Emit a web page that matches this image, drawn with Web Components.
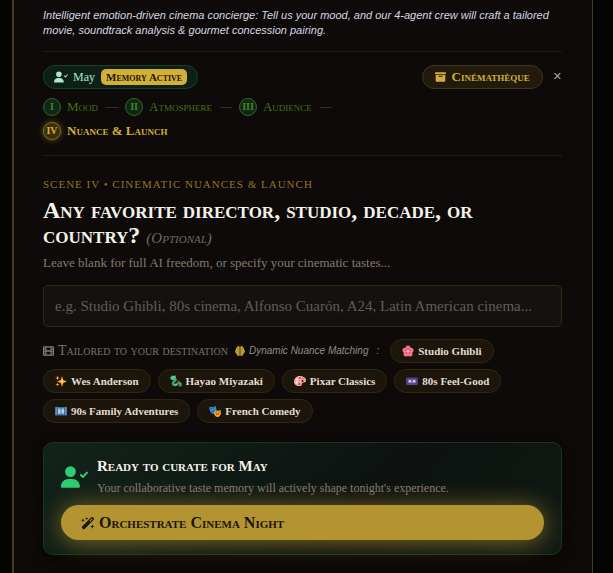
<!DOCTYPE html>
<html lang="en">
<head>
<meta charset="utf-8">
<meta name="viewport" content="width=device-width, initial-scale=1">
<title>Cinema Concierge</title>
<style>
  body {
    margin: 0;
    background: #040403;
    color: #f5f2ea;
    font-family: "Liberation Serif", serif;
    --display: "Liberation Serif", serif;
    --gold: #d4af37;
    --gold-dark: #b39431;
    --muted: #857b6e;
    --line: #221e18;
  }
</style>
</head>
<body>
<cinema-frame>
  <cinema-tagline>Intelligent emotion-driven cinema concierge: Tell us your mood, and our 4-agent crew will craft a tailored movie, soundtrack analysis &amp; gourmet concession pairing.</cinema-tagline>
  <guest-bar name="May"></guest-bar>
  <scene-steps></scene-steps>
  <nuance-form></nuance-form>
  <launch-card>
    <span slot="title">Ready to curate for May</span>
    <span slot="text">Your collaborative taste memory will actively shape tonight's experience.</span>
  </launch-card>
</cinema-frame>

<script>
const ICONS = {
  userCheck: ['0 0 640 512', '<path fill="currentColor" d="M96 128a128 128 0 1 1 256 0A128 128 0 1 1 96 128zM0 482.3C0 383.8 79.800 304 178.300 304h91.400C368.200 304 448 383.800 448 482.300c0 16.400-13.300 29.700-29.700 29.700H29.700C13.300 512 0 498.700 0 482.300z"/><path d="M472 208l48 48 96-104" fill="none" stroke="currentColor" stroke-width="46" stroke-linecap="round" stroke-linejoin="round"/>'],
  archive: ['0 0 512 512', '<path fill="currentColor" d="M32 32h448c18 0 32 14 32 32v32c0 18-14 32-32 32H32C14 128 0 114 0 96V64c0-18 14-32 32-32zM32 160h448v256c0 35-29 64-64 64H96c-35 0-64-29-64-64zm128 48v16c0 9 7 16 16 16h160c9 0 16-7 16-16v-16c0-9-7-16-16-16H176c-9 0-16 7-16 16z"/>'],
  film: ['0 0 512 512', '<path fill="currentColor" fill-rule="evenodd" d="M64 32h384c35 0 64 29 64 64v320c0 35-29 64-64 64H64c-35 0-64-29-64-64V96c0-35 29-64 64-64zM48 96v48h64V88H56zM48 192v48h64v-48zM48 288v48h64v-48zM48 376v48h64v-48zM400 88v56h64V88zM400 192v48h64v-48zM400 288v48h64v-48zM400 376v48h64v-48zM160 88v136h192V88zM160 288v136h192V288z"/>'],
  brain: ['0 0 512 512', '<path fill="currentColor" d="M184 0c31 0 56 25 56 56v400c0 31-25 56-56 56-29 0-53-21-56-50-35 3-64-25-64-60 0-12 3-24 9-34-43-9-73-44-73-86 0-34 20-64 49-78-31-38-12-92 35-104-11-36 11-72 46-77 5-14 28-23 54-23zM328 0c-31 0-56 25-56 56v400c0 31 25 56 56 56 29 0 53-21 56-50 35 3 64-25 64-60 0-12-3-24-9-34 43-9 73-44 73-86 0-34-20-64-49-78 31-38 12-92-35-104 11-36-11-72-46-77-5-14-28-23-54-23z"/>'],
  wand: ['0 0 576 512', '<path fill="currentColor" fill-rule="evenodd" d="M234 7l18 45 45 18-45 18-18 45-18-45-45-18 45-18zM80 64l22 58 58 22-58 22-22 58-22-58-58-22 58-22zM464 320l24 64 64 24-64 24-24 64-24-64-64-24 64-24zM46 395L421 20c18-18 48-18 66 0l37 37c18 18 18 48 0 66L149 498c-18 18-48 18-66 0l-37-37c-18-18-18-48 0-66zM378 196l105-105-30-30-105 105z"/>'],
  blossom: ['0 0 24 24', '<g fill="#fb7195"><circle cx="12" cy="6" r="5"/><circle cx="18" cy="10.500" r="5"/><circle cx="16" cy="18" r="5"/><circle cx="8" cy="18" r="5"/><circle cx="6" cy="10.500" r="5"/></g><path d="M12 12V5M12 12l6-2M12 12l4 6M12 12l-4 6M12 12l-6-2" stroke="#d92d62" stroke-width="1.300"/><circle cx="12" cy="12.500" r="2.500" fill="#ffe0a1"/>'],
  sparkles: ['0 0 24 24', '<path fill="#fda83a" d="M14 2l2.500 8L24 13l-7.500 3L14 24l-2.500-8L4 13l7.500-3zM5 1l1.200 3.800L10 6 6.200 7.200 5 11 3.800 7.200 0 6l3.800-1.200zM5 15l1 3 3 1-3 1-1 3-1-3-3-1 3-1z"/><path fill="#ffdc79" d="M14 8l1 4 4 1-4 1-1 4-1-4-4-1 4-1z"/>'],
  dragon: ['0 0 24 24', '<path d="M5 6c6 0 7 3 4 6s-5 7 0 8 5-4 9-4 4 4 2 5" fill="none" stroke="#35a06f" stroke-width="5" stroke-linecap="round"/><path fill="#4fbd88" d="M0 6l4-5 5 1 2-2 1 5-2 5-7 0z"/><path d="M10 9l4 1-3 2M15 15l2-4 2 4" fill="none" stroke="#d9653d" stroke-width="1.300"/><path d="M8 18c2 3 5 2 6 0" fill="none" stroke="#e8cf71" stroke-width="1.500"/><circle cx="6" cy="4" r="1" fill="#fff"/>'],
  palette: ['0 0 24 24', '<path fill="#f5a5a2" fill-rule="evenodd" d="M12 2C4 2 0 7 0 13c0 7 6 10 13 9 4-1 2-5 4-6 2-2 7 0 7-5 0-6-6-9-12-9zm5 8a2 2 0 1 1 0 4 2 2 0 0 1 0-4z"/><circle cx="6" cy="9" r="2" fill="#fff0b0"/><circle cx="12" cy="6" r="2" fill="#de3947"/><circle cx="5" cy="15" r="2" fill="#fff"/><circle cx="11" cy="18" r="2" fill="#9a3b70"/><circle cx="18" cy="7" r="1.500" fill="#d8485b"/>'],
  cassette: ['0 0 24 24', '<rect y="5" width="24" height="15" rx="2" fill="#534080"/><rect x="4" y="9" width="16" height="7" rx="1" fill="#8b79b8"/><circle cx="8" cy="12.500" r="2" fill="#eee9f7"/><circle cx="16" cy="12.500" r="2" fill="#eee9f7"/><path fill="#6b539a" d="M11 10h2v4h-2zM6 17h12v2H6z"/>'],
  frames: ['0 0 24 24', '<rect y="4" width="24" height="17" rx="1" fill="#456ea3"/><path fill="#91c8f1" d="M5 7h14v11H5z"/><path d="M5 5v15M19 5v15M12 7v11" stroke="#315583" stroke-width="1.500"/><path d="M2.500 5v15M21.500 5v15" stroke="#b3c8df" stroke-width="2" stroke-dasharray="2 2"/><path d="M7 14l2-4 2 4M14 14l2-4 2 4" fill="none" stroke="#d5efff"/>'],
  masks: ['0 0 24 24', '<path fill="#328bdf" d="M1 3c5 2 8 1 13-1l1 9c0 5-3 7-5 7-4 0-8-4-9-9z"/><path fill="#f4a52b" d="M11 10c4 2 8 2 12 0l1 6c-1 5-3 8-7 8s-7-4-7-8z"/><path d="M4 7l2-1M9 6l2-1M5 12c3 3 6 1 7-2" fill="none" stroke="#0b3768" stroke-width="1.500"/><path d="M13 15l3-1M19 14l2 1M14 20c1-3 5-3 6-1" fill="none" stroke="#653609" stroke-width="1.500"/>']
};

class CineIcon extends HTMLElement {
  constructor() {
    super();
    this.attachShadow({mode: 'open'});
  }

  connectedCallback() {
    const [box, body] = ICONS[this.getAttribute('name')];
    this.shadowRoot.innerHTML = `
      <style>
        :host { display: block; flex: none; width: 12px; height: 12px; }
        svg { display: block; width: 100%; height: 100%; }
      </style>
      <svg viewBox="${box}" aria-hidden="true">${body}</svg>
    `;
  }
}

class CinemaFrame extends HTMLElement {
  constructor() {
    super();
    this.attachShadow({mode: 'open'}).innerHTML = `
      <style>
        :host { display: block; padding: 0 20px 0 12px; }
        main {
          box-sizing: border-box;
          min-height: 100vh;
          padding: 8px 30px 18px 29px;
          border: solid #493b17;
          border-width: 0 1px 0 2px;
          background: #0e0a09;
        }
      </style>
      <main><slot></slot></main>
    `;
  }
}

class CinemaTagline extends HTMLElement {
  constructor() {
    super();
    this.attachShadow({mode: 'open'}).innerHTML = `
      <style>
        :host {
          display: block;
          padding-bottom: 13px;
          border-bottom: 1px dotted #352e22;
          color: #d3d8e3;
          font: italic 11px/15px "Liberation Sans", sans-serif;
        }
        p { margin: 0; }
      </style>
      <p><slot></slot></p>
    `;
  }
}

class GuestBar extends HTMLElement {
  constructor() {
    super();
    this.attachShadow({mode: 'open'});
  }

  connectedCallback() {
    this.shadowRoot.innerHTML = `
      <style>
        :host {
          display: flex;
          align-items: center;
          justify-content: space-between;
          margin-top: 13px;
        }
        div { display: flex; align-items: center; }
        .guest, .archive {
          box-sizing: border-box;
          height: 24px;
          padding: 0 10px;
          border: 1px solid #16402c;
          border-radius: 12px;
        }
        .guest { gap: 5px; background: #0d2018; color: #a9e8cb; font-size: 12px; }
        .guest cine-icon { width: 14px; }
        .badge {
          margin-left: 1px;
          padding: 0 5px;
          border-radius: 5px;
          background: var(--gold);
          color: #1b1508;
          font: bold small-caps 11px/16px var(--display);
        }
        .archive {
          display: flex;
          align-items: center;
          gap: 6px;
          padding: 0 12px;
          border-color: #40361a;
          background: #211a0d;
          color: var(--gold);
          font: bold small-caps 13px/16px var(--display);
        }
        .archive cine-icon { width: 11px; }
        .close {
          margin-left: 10px;
          padding: 0;
          border: 0;
          background: none;
          color: #aaa69d;
          font: 11px/16px "DejaVu Sans", sans-serif;
        }
      </style>
      <div class="guest">
        <cine-icon name="userCheck"></cine-icon>
        <span>${this.getAttribute('name')}</span>
        <span class="badge">Memory Active</span>
      </div>
      <div>
        <button class="archive" type="button"><cine-icon name="archive"></cine-icon>Cinémathèque</button>
        <button class="close" type="button" aria-label="Close">✕</button>
      </div>
    `;
  }
}

class SceneSteps extends HTMLElement {
  #steps = [
    ['I', 'Mood'],
    ['II', 'Atmosphere'],
    ['III', 'Audience'],
    ['IV', 'Nuance &amp; Launch']
  ];

  constructor() {
    super();
    this.attachShadow({mode: 'open'});
  }

  connectedCallback() {
    this.shadowRoot.innerHTML = `
      <style>
        :host {
          display: block;
          padding: 9px 0 15px;
          border-bottom: 1px solid var(--line);
        }
        ol {
          display: flex;
          flex-wrap: wrap;
          gap: 6px 7px;
          margin: 0;
          padding: 0;
          list-style: none;
        }
        li {
          display: flex;
          align-items: center;
          gap: 6px;
          color: #427411;
          font: small-caps 13px/18px var(--display);
        }
        li:not(:last-child)::after {
          content: "";
          width: 12px;
          height: 1px;
          margin-left: 2px;
          background: #39311f;
        }
        .num {
          box-sizing: border-box;
          width: 18px;
          height: 18px;
          border: 1px solid #3c6420;
          border-radius: 50%;
          background: #0c2819;
          color: #4b8414;
          text-align: center;
          font: bold 10px/16px var(--display);
        }
        li:last-child { flex-basis: 100%; color: var(--gold); font-weight: bold; }
        li:last-child .num {
          border-color: #806a2b;
          background: #3c2e10;
          color: var(--gold);
          box-shadow: 0 0 6px #6e571c;
        }
      </style>
      <ol>
        ${this.#steps.map(([num, label]) => `
          <li><span class="num">${num}</span><span>${label}</span></li>
        `).join('')}
      </ol>
    `;
  }
}

class NuanceChip extends HTMLElement {
  constructor() {
    super();
    this.attachShadow({mode: 'open'});
  }

  connectedCallback() {
    this.shadowRoot.innerHTML = `
      <style>
        :host { display: block; }
        button {
          box-sizing: border-box;
          display: flex;
          align-items: center;
          gap: 4px;
          height: 24px;
          padding: 0 11px;
          border: 1px solid #30270f;
          border-radius: 12px;
          background: #1c150b;
          color: #e2ddd2;
          font: bold 11px/16px var(--display);
          white-space: nowrap;
        }
      </style>
      <button type="button"><cine-icon name="${this.getAttribute('icon')}"></cine-icon><slot></slot></button>
    `;
  }
}

class NuanceForm extends HTMLElement {
  #chips = [
    ['blossom', 'Studio Ghibli'],
    ['sparkles', 'Wes Anderson'],
    ['dragon', 'Hayao Miyazaki'],
    ['palette', 'Pixar Classics'],
    ['cassette', '80s Feel-Good'],
    ['frames', '90s Family Adventures'],
    ['masks', 'French Comedy']
  ];

  constructor() {
    super();
    this.attachShadow({mode: 'open'});
  }

  connectedCallback() {
    this.shadowRoot.innerHTML = `
      <style>
        :host { display: block; padding-top: 20px; }
        p, h2 { margin: 0; }
        .scene {
          color: #947624;
          font-size: 11px;
          line-height: 16px;
          letter-spacing: 1px;
          text-transform: uppercase;
        }
        h2 {
          margin-top: 6px;
          font: bold small-caps 24px/25px var(--display);
        }
        em { color: #706b65; font-size: 15px; font-weight: normal; }
        .hint { margin-top: 3px; color: var(--muted); font-size: 13px; line-height: 18px; }
        input {
          box-sizing: border-box;
          display: block;
          width: 100%;
          height: 42px;
          margin-top: 13px;
          padding: 0 11px;
          border: 1px solid #30280f;
          border-radius: 5px;
          background: #15110e;
          color: #f5f2ea;
          font: 15px/20px var(--display);
        }
        input::placeholder { color: #625d58; opacity: 1; }
        .chips {
          display: flex;
          flex-wrap: wrap;
          align-items: center;
          gap: 6px 7px;
          margin-top: 12px;
        }
        .tailored, .match { display: flex; align-items: center; gap: 4px; color: #77726b; }
        .tailored { font: small-caps 14px/16px var(--display); }
        .tailored cine-icon { width: 11px; color: #858078; }
        .match { font: italic 10px/16px "Liberation Sans", sans-serif; color: #908c85; }
        .match cine-icon { width: 10px; color: #b99b31; }
        .colon { margin: 0 4px; }
      </style>
      <p class="scene">Scene IV • Cinematic Nuances &amp; Launch</p>
      <h2><label for="taste">Any favorite director, studio, decade, or <span>country?</span> <em>(Optional)</em></label></h2>
      <p class="hint">Leave blank for full AI freedom, or specify your cinematic tastes...</p>
      <input id="taste" type="text" placeholder="e.g. Studio Ghibli, 80s cinema, Alfonso Cuarón, A24, Latin American cinema...">
      <div class="chips">
        <span class="tailored"><cine-icon name="film"></cine-icon>Tailored to your destination</span>
        <span class="match"><cine-icon name="brain"></cine-icon>Dynamic Nuance Matching <span class="colon">:</span></span>
        ${this.#chips.map(([icon, label]) => `<nuance-chip icon="${icon}">${label}</nuance-chip>`).join('\n')}
      </div>
    `;
  }
}

class LaunchCard extends HTMLElement {
  constructor() {
    super();
    this.attachShadow({mode: 'open'}).innerHTML = `
      <style>
        :host {
          display: block;
          margin-top: 19px;
          padding: 14px 17px;
          border: 1px solid #173526;
          border-radius: 10px;
          background: linear-gradient(135deg, #12231a, #0d1210 60%, #101a13);
          box-shadow: 0 4px 14px #080605;
        }
        .ready { display: flex; align-items: center; gap: 9px; }
        .ready cine-icon { width: 27px; height: 22px; color: #2ecc71; }
        h3, p { margin: 0; }
        h3 { font: bold small-caps 15px/18px var(--display); }
        p { margin-top: 5px; color: var(--muted); font-size: 12px; line-height: 16px; }
        button {
          display: flex;
          align-items: center;
          gap: 4px;
          width: 100%;
          height: 35px;
          margin-top: 9px;
          padding: 0 20px;
          border: 0;
          border-radius: 18px;
          background: var(--gold-dark);
          box-shadow: 0 2px 24px #b39431b0;
          color: #1a1409;
          font: bold small-caps 16px/20px var(--display);
        }
        button cine-icon { width: 14px; height: 14px; }
      </style>
      <div class="ready">
        <cine-icon name="userCheck"></cine-icon>
        <div>
          <h3><slot name="title"></slot></h3>
          <p><slot name="text"></slot></p>
        </div>
      </div>
      <button type="button"><cine-icon name="wand"></cine-icon>Orchestrate Cinema Night</button>
    `;
  }
}

customElements.define('cine-icon', CineIcon);
customElements.define('cinema-frame', CinemaFrame);
customElements.define('cinema-tagline', CinemaTagline);
customElements.define('guest-bar', GuestBar);
customElements.define('scene-steps', SceneSteps);
customElements.define('nuance-chip', NuanceChip);
customElements.define('nuance-form', NuanceForm);
customElements.define('launch-card', LaunchCard);
</script>
</body>
</html>
